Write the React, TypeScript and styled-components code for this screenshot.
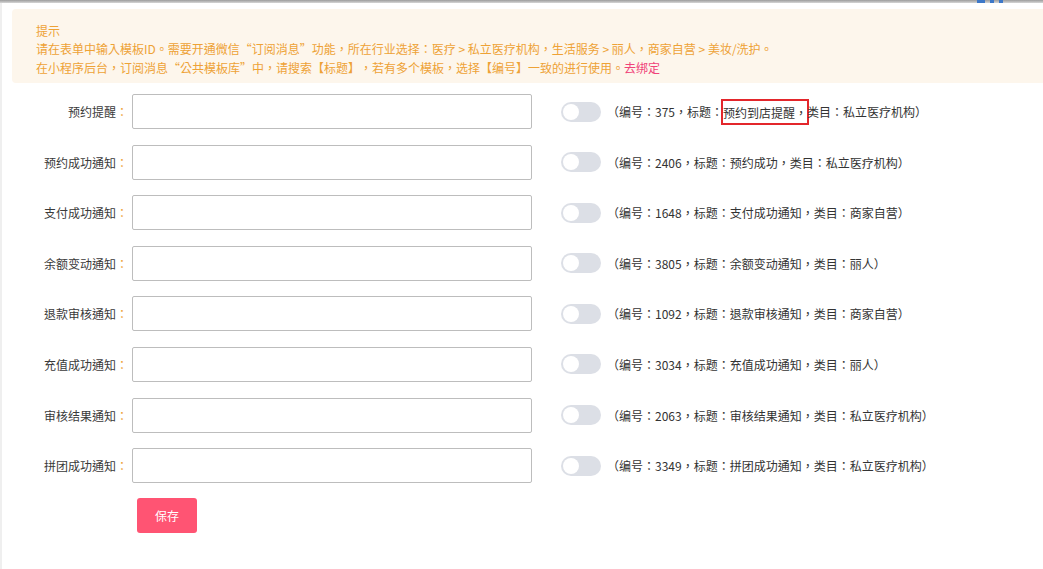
import React from "react";
import styled, { createGlobalStyle } from "styled-components";

const GlobalStyle = createGlobalStyle`
  html, body {
    margin: 0;
    padding: 0;
    background: #fff;
    overflow: hidden;
  }
  body {
    font-family: "Noto Sans CJK TC", "Noto Sans CJK SC", "Noto Sans", sans-serif;
    font-size: 12px;
    color: #333;
    text-spacing-trim: space-all;
  }
`;

const TopStrip = styled.div`
  height: 3px;
  background: linear-gradient(#9c9c9c, #d6d6d6);
  display: flex;
  justify-content: flex-end;
  gap: 5px;
  padding-right: 40px;
`;

const StripMark = styled.span<{ $w: number }>`
  width: ${(p) => p.$w}px;
  height: 3px;
  background: #3d78c8;
`;

const Main = styled.div`
  display: flex;
  min-height: 566px;
`;

const Gutter = styled.div`
  width: 2px;
  background: #efefef;
  flex-shrink: 0;
`;

const Content = styled.div`
  flex: 1;
  padding: 6px 0 0 10px;
`;

const Notice = styled.div`
  background: #fdf6ec;
  border-radius: 4px 0 0 4px;
  margin-right: -10px;
  padding: 14px 24px 6px;
  color: #eea236;
  font-size: 12px;
`;

const NoticeTitle = styled.div`
  line-height: 16px;
`;

const NoticeLine = styled.div`
  line-height: 19px;
`;

const NoticeLink = styled.a`
  color: #f0437a;
  text-decoration: none;
  cursor: pointer;
`;

const Form = styled.div`
  margin-top: 11px;
  display: flex;
  flex-direction: column;
  gap: 15.6px;
`;

const Row = styled.div`
  display: flex;
  align-items: center;
  height: 35px;
`;

const Label = styled.label`
  width: 116px;
  margin-right: 4px;
  text-align: right;
  color: #3a3a3a;
  white-space: nowrap;
`;

const Colon = styled.span`
  color: #eea236;
`;

const Input = styled.input`
  box-sizing: border-box;
  width: 400px;
  height: 35px;
  border: 1px solid #bdbdbd;
  border-radius: 2px;
  padding: 0 8px;
  font: inherit;
  outline: none;
`;

const Switch = styled.span`
  box-sizing: border-box;
  margin-left: 29px;
  width: 40px;
  height: 20px;
  border-radius: 10px;
  background: #dcdfe6;
  padding: 2px;
  display: flex;
  align-items: center;
`;

const Knob = styled.span`
  width: 16px;
  height: 16px;
  border-radius: 50%;
  background: #fff;
`;

const Info = styled.span`
  margin-left: 6px;
  color: #333;
  white-space: nowrap;
`;

const Highlight = styled.span`
  border: 2px solid #e3262b;
  padding: 2.5px 0;
  margin: 0 -2px;
`;

const SaveButton = styled.button`
  margin: 15px 0 0 125px;
  width: 60px;
  height: 35px;
  border: none;
  border-radius: 3px;
  background: #ff5473;
  color: #fff;
  font: inherit;
  font-size: 12px;
  cursor: pointer;
`;

type Item = { label: string; no: string; title: string; cat: string; mark?: boolean };

const items: Item[] = [
  { label: "预约提醒", no: "375", title: "预约到店提醒", cat: "私立医疗机构", mark: true },
  { label: "预约成功通知", no: "2406", title: "预约成功", cat: "私立医疗机构" },
  { label: "支付成功通知", no: "1648", title: "支付成功通知", cat: "商家自营" },
  { label: "余额变动通知", no: "3805", title: "余额变动通知", cat: "丽人" },
  { label: "退款审核通知", no: "1092", title: "退款审核通知", cat: "商家自营" },
  { label: "充值成功通知", no: "3034", title: "充值成功通知", cat: "丽人" },
  { label: "审核结果通知", no: "2063", title: "审核结果通知", cat: "私立医疗机构" },
  { label: "拼团成功通知", no: "3349", title: "拼团成功通知", cat: "私立医疗机构" },
];

export default function App() {
  return (
    <>
      <GlobalStyle />
      <TopStrip>
        <StripMark $w={8} />
        <StripMark $w={4} />
        <StripMark $w={4} />
      </TopStrip>
      <Main>
        <Gutter />
        <Content>
          <Notice>
            <NoticeTitle>提示</NoticeTitle>
            <NoticeLine>
              请在表单中输入模板ID。需要开通微信“订阅消息”功能，所在行业选择：医疗 &gt; 私立医疗机构，生活服务 &gt; 丽人，商家自营 &gt; 美妆/洗护。
            </NoticeLine>
            <NoticeLine>
              在小程序后台，订阅消息“公共模板库”中，请搜索【标题】，若有多个模板，选择【编号】一致的进行使用。
              <NoticeLink>去绑定</NoticeLink>
            </NoticeLine>
          </Notice>
          <Form>
            {items.map((it) => (
              <Row key={it.label}>
                <Label>
                  {it.label}
                  <Colon>：</Colon>
                </Label>
                <Input type="text" />
                <Switch>
                  <Knob />
                </Switch>
                <Info>
                  （编号：{it.no}，标题：
                  {it.mark ? (
                    <Highlight>{it.title}，</Highlight>
                  ) : (
                    <>{it.title}，</>
                  )}
                  类目：{it.cat}）
                </Info>
              </Row>
            ))}
          </Form>
          <SaveButton>保存</SaveButton>
        </Content>
      </Main>
    </>
  );
}
